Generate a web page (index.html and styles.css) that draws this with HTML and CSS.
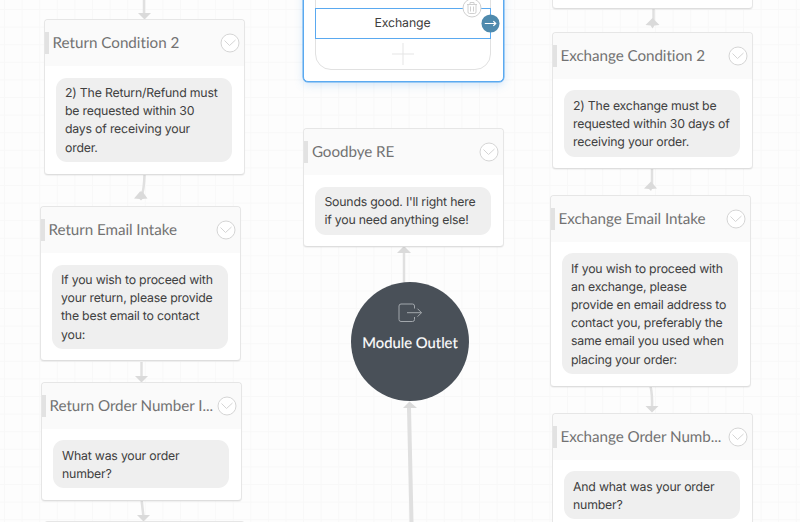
FILE: index.html
```html
<!DOCTYPE html>
<html lang="en">
<head>
<meta charset="utf-8">
<title>Conversation flow</title>
<link rel="stylesheet" href="styles.css">
</head>
<body>
<main class="canvas">
  <svg class="links" viewBox="0 0 800 522">
    <g class="wires">
      <path d="M144 0V15"/>
      <path d="M144.500 175Q144 190 141.500 196"/>
      <path d="M141.500 362V378"/>
      <path d="M141.700 501L143.500 517"/>
      <path d="M404 282V252"/>
      <path class="thick" d="M411.500 522L409 408"/>
      <path d="M653.500 8V24"/>
      <path d="M652 169V186"/>
      <path d="M650.500 386Q652.500 395 652 408"/>
    </g>
    <g class="heads">
      <path d="M138 13h13l-6.500 6.500z"/>
      <path d="M134 198.500l6-7h2.500l5 7-5 .500-1.500 1.500-1.500-1.500z"/>
      <path d="M135 376h13l-6.500 6.500z"/>
      <path d="M137 515h13l-6.500 6.500z"/>
      <path d="M397 253l7-7 7 7z"/>
      <path d="M403 408l6.500-6.500 7.500 6.500z"/>
      <path d="M645.500 25l7-7 7 7-5 .500-2 3-2-3z"/>
      <path d="M644 188.500l7-7 6 7-5 .500-1 2-2-2z"/>
      <path d="M645.500 406h13l-6.500 6.500z"/>
    </g>
  </svg>

  <article class="card return-condition">
    <header><h2>Return Condition 2</h2><svg class="toggle" viewBox="0 0 20 20"><circle cx="10" cy="10" r="9"/><path d="M4.500 7.500L9.500 12.500L15.500 7"/></svg></header>
    <p>2) The Return/Refund must<br>be requested within 30<br>days of receiving your<br>order.</p>
  </article>
  <article class="card return-email">
    <header><h2>Return Email Intake</h2><svg class="toggle" viewBox="0 0 20 20"><circle cx="10" cy="10" r="9"/><path d="M4.500 7.500L9.500 12.500L15.500 7"/></svg></header>
    <p>If you wish to proceed with<br>your return, please provide<br>the best email to contact<br>you:</p>
  </article>
  <article class="card return-order">
    <header><h2>Return Order Number I...</h2><svg class="toggle" viewBox="0 0 20 20"><circle cx="10" cy="10" r="9"/><path d="M4.500 7.500L9.500 12.500L15.500 7"/></svg></header>
    <p>What was your order<br>number?</p>
  </article>
  <article class="card return-next"></article>

  <article class="card choice">
    <div class="options">
      <div class="option">Exchange</div>
      <div class="add"><svg viewBox="0 0 22 22"><path d="M11 0V22M0 11H22"/></svg></div>
    </div>
    <svg class="trash" viewBox="0 0 20 20"><circle cx="10" cy="10" r="9"/><path d="M5 6.500H15M8 6.500V4.500H12V6.500M6 6.500V14Q6 15.500 7.500 15.500H12.500Q14 15.500 14 14V6.500M8.500 8.500V13.500M11.500 8.500V13.500"/></svg>
    <svg class="go" viewBox="0 0 20 20"><circle cx="10" cy="10" r="9.500"/><path d="M4 10H15.500M13 7.500L15.500 10L13 12.500"/></svg>
  </article>

  <article class="card goodbye">
    <header><h2>Goodbye RE</h2><svg class="toggle" viewBox="0 0 20 20"><circle cx="10" cy="10" r="9"/><path d="M4.500 7.500L9.500 12.500L15.500 7"/></svg></header>
    <p>Sounds good. I'll right here<br>if you need anything else!</p>
  </article>

  <section class="outlet">
    <svg viewBox="0 0 24 20"><path d="M16.500 5.500V3Q16.500 1 14.500 1H3Q1 1 1 3V16.500Q1 18.500 3 18.500H14.500Q16.500 18.500 16.500 16.500V14M9 9.700H23.500M19.500 5.700L23.500 9.700L19.500 13.700"/></svg>
    <span>Module Outlet</span>
  </section>

  <article class="card exchange-previous"></article>
  <article class="card exchange-condition">
    <header><h2>Exchange Condition 2</h2><svg class="toggle" viewBox="0 0 20 20"><circle cx="10" cy="10" r="9"/><path d="M4.500 7.500L9.500 12.500L15.500 7"/></svg></header>
    <p>2) The exchange must be<br>requested within 30 days of<br>receiving your order.</p>
  </article>
  <article class="card exchange-email">
    <header><h2>Exchange Email Intake</h2><svg class="toggle" viewBox="0 0 20 20"><circle cx="10" cy="10" r="9"/><path d="M4.500 7.500L9.500 12.500L15.500 7"/></svg></header>
    <p>If you wish to proceed with<br>an exchange, please<br>provide en email address to<br>contact you, preferably the<br>same email you used when<br>placing your order:</p>
  </article>
  <article class="card exchange-order">
    <header><h2>Exchange Order Numb...</h2><svg class="toggle" viewBox="0 0 20 20"><circle cx="10" cy="10" r="9"/><path d="M4.500 7.500L9.500 12.500L15.500 7"/></svg></header>
    <p>And what was your order<br>number?</p>
  </article>
</main>
</body>
</html>
```
FILE: styles.css
```css
* { box-sizing: border-box; }
body {
  margin: 0;
  font-family: Inter, "Liberation Sans", sans-serif;
  text-rendering: geometricPrecision;
}

.canvas {
  position: relative;
  width: 800px;
  height: 522px;
  overflow: hidden;
  background-color: #fdfdfd;
  background-image:
    linear-gradient(to right, #f8f8f8 1px, transparent 1px),
    linear-gradient(to bottom, #f8f8f8 1px, transparent 1px);
  background-size: 17.6px 17.6px;
  background-position: 4px 9px;
}

.links { position: absolute; left: 0; top: 0; width: 800px; height: 522px; }
.wires { fill: none; stroke: #e0e0e0; stroke-width: 2.5; }
.wires .thick { stroke-width: 4; }
.heads { fill: #dadada; }

/* nodes on the free canvas */
.card {
  position: absolute;
  width: 201px;
  background: #fff;
  border: 1px solid #e6e6e6;
  border-bottom-color: #dedede;
  border-radius: 4px;
  box-shadow: 0 1px 1px rgba(0, 0, 0, .05);
}
.return-condition { left: 44px; top: 19px; height: 156px; }
.return-email { left: 40px; top: 206px; height: 155px; }
.return-order { left: 41px; top: 382px; height: 119px; }
.return-next { left: 44px; top: 521px; height: 80px; }
.goodbye { left: 303.400px; top: 128px; height: 119px; }
.exchange-previous { left: 552.400px; top: -60px; height: 69px; }
.exchange-condition { left: 552px; top: 32px; height: 137px; }
.exchange-email { left: 550px; top: 195px; height: 192px; }
.exchange-order { left: 552px; top: 413px; height: 119px; }

.card header {
  display: flex;
  align-items: center;
  justify-content: space-between;
  height: 46px;
  padding-right: 4px;
  background: linear-gradient(#e2e2e2, #e2e2e2) 0 12px / 4px 22px no-repeat #fafafa;
  border-radius: 4px 4px 0 0;
}
.card h2 {
  margin: 0;
  padding-left: 7.500px;
  color: #727272;
  font: 400 15.200px/22px Lato, "Liberation Sans", sans-serif;
  font-variant-ligatures: none;
  white-space: nowrap;
}
.card:not(.return-condition) h2 { letter-spacing: -.05px; }
.toggle { flex: none; width: 20px; height: 20px; fill: #fff; stroke: #d5d5d5; stroke-width: 1; }
.card p {
  margin: 11px 12px 0 11px;
  padding: 6.500px 0 5.500px 9px;
  border-radius: 11px;
  background: #efefef;
  color: #404040;
  font-size: 12.300px;
  line-height: 18.200px;
  letter-spacing: -.2px;
  white-space: nowrap;
}
.return-condition p, .return-email p, .goodbye p { margin-top: 11.500px; }

.choice {
  left: 302.500px;
  top: -60px;
  height: 142px;
  border-color: #5aa9f0;
  border-radius: 5px;
  box-shadow: 0 0 0 .5px #5aa9f0, 0 3px 9px rgba(90, 165, 235, .25);
}
.options {
  width: 176px;
  height: 129px;
  margin-left: 11px;
  padding-top: 66px;
  border: 1px solid #e1e1e1;
  border-radius: 16px;
}
.option {
  height: 31px;
  margin: 0 -1px;
  border: 1px solid #5aa9f0;
  color: #404040;
  font-size: 12.300px;
  letter-spacing: -.1px;
  line-height: 28px;
  text-align: center;
}
.add { display: flex; justify-content: center; padding-top: 4px; }
.add svg { width: 22px; height: 22px; fill: none; stroke: #e5e5e5; stroke-width: 1; }
.trash { position: absolute; left: 158px; top: 57px; width: 20px; height: 20px; fill: #fff; stroke: #d0d0d0; stroke-width: 1; }
.go { position: absolute; left: 177px; top: 73px; width: 19px; height: 19px; fill: #4f8aad; }
.go path { fill: none; stroke: #fff; stroke-width: 1.300; }

.outlet {
  position: absolute;
  left: 351px;
  top: 282px;
  display: flex;
  flex-direction: column;
  align-items: center;
  gap: 9px;
  width: 118px;
  height: 119px;
  padding-top: 21px;
  border-radius: 50%;
  background: #495058;
  color: #fff;
  font: 400 14.800px/22px Lato, "Liberation Sans", sans-serif;
  -webkit-text-stroke: .15px #fff;
  white-space: nowrap;
}
.outlet svg { width: 24px; height: 20px; fill: none; stroke: #a2a7ac; stroke-width: 1; }
```
